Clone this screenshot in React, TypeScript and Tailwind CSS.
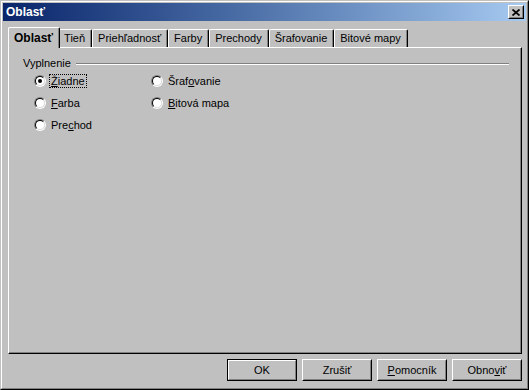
import React from "react";

const tabs = ["Oblasť", "Tieň", "Priehľadnosť", "Farby", "Prechody", "Šrafovanie", "Bitové mapy"];

const Radio = (props: { checked?: boolean }) => (
    <span className="flex h-[12px] w-[12px] shrink-0 items-center justify-center rounded-full border border-t-[#808080] border-l-[#808080] border-r-white border-b-white">
        <span className="flex h-[10px] w-[10px] items-center justify-center rounded-full border border-t-black border-l-black border-r-[#dfdfdf] border-b-[#dfdfdf] bg-white">
            {props.checked && <span className="h-[4px] w-[4px] rounded-full bg-black" />}
        </span>
    </span>
);

const RadioRow = (props: { checked?: boolean; focused?: boolean; children: React.ReactNode }) => (
    <div className="flex h-[22px] items-center">
        <Radio checked={props.checked} />
        <span className={"ml-[3px] border px-px leading-[12px] " + (props.focused ? "border-dotted border-black" : "border-transparent")}>
            {props.children}
        </span>
    </div>
);

const Button = (props: { isDefault?: boolean; children: React.ReactNode }) => {
    if (props.isDefault) {
        return (
            <div className="h-[22px] w-[70px] border border-black">
                <div className="flex h-full items-center justify-center border border-t-white border-l-white border-r-[#808080] border-b-[#808080]">
                    {props.children}
                </div>
            </div>
        );
    }
    return (
        <div className="h-[22px] w-[70px] border border-t-white border-l-white border-r-black border-b-black">
            <div className="flex h-full items-center justify-center border border-t-[#c0c0c0] border-l-[#c0c0c0] border-r-[#808080] border-b-[#808080]">
                {props.children}
            </div>
        </div>
    );
};

export default function App() {
    return (
        <div className="h-[390px] w-[529px] border border-t-[#c0c0c0] border-l-[#c0c0c0] border-r-black border-b-black bg-[#c0c0c0] font-['Liberation_Sans',Arial,sans-serif] text-[11px] text-black">
            <div className="flex h-full flex-col border border-t-white border-l-white border-r-[#808080] border-b-[#808080] p-px">
                {/* title bar */}
                <div className="flex h-[18px] shrink-0 items-center justify-between bg-linear-to-r from-[#0a246a] to-[#a6caf0] pl-[3px] pr-[2px]">
                    <span className="text-[12px] font-bold text-white">Oblasť</span>
                    <div className="h-[14px] w-[16px] border border-t-white border-l-white border-r-black border-b-black bg-[#c0c0c0]">
                        <div className="flex h-full items-center justify-center border border-t-[#c0c0c0] border-l-[#c0c0c0] border-r-[#808080] border-b-[#808080]">
                            <svg width="8" height="7" viewBox="0 0 8 7">
                                <path d="M0.5 0.5 L7.5 6.5 M7.5 0.5 L0.5 6.5" stroke="black" strokeWidth="1.7" fill="none" />
                            </svg>
                        </div>
                    </div>
                </div>

                {/* tabs */}
                <div className="relative z-10 mt-[6px] -mb-px ml-[5px] flex h-[21px] shrink-0 items-end pl-[2px]">
                    {tabs.map((t, i) =>
                        i === 0 ? (
                            <div key={t} className="relative z-10 -mx-[2px] h-[21px] rounded-tr-[2px] rounded-tl-[2px] border-t border-l border-r border-t-white border-l-white border-r-black bg-[#c0c0c0]">
                                <div className="flex h-full items-center border-r border-r-[#808080] px-[5px] pb-px text-[12px] font-bold">{t}</div>
                            </div>
                        ) : (
                            <div key={t} className="mb-px h-[18px] rounded-tr-[2px] rounded-tl-[2px] border-t border-l border-r border-t-white border-l-white border-r-black">
                                <div className="flex h-full items-center border-r border-r-[#808080] px-[5px]">{t}</div>
                            </div>
                        )
                    )}
                </div>

                {/* tab page */}
                <div className="ml-[5px] mr-[4px] flex-1 border border-t-white border-l-white border-r-black border-b-black">
                    <div className="h-full border-r border-b border-r-[#808080] border-b-[#808080] pt-[9px] pl-[14px] pr-[11px]">
                        <div className="flex h-[13px] items-center">
                            <span>Vyplnenie</span>
                            <div className="ml-[5px] h-[2px] flex-1 border-t border-b border-t-[#808080] border-b-white" />
                        </div>
                        <div className="flex pl-[11px]">
                            <div className="w-[117px]">
                                <RadioRow checked focused><span className="underline">Ž</span>iadne</RadioRow>
                                <RadioRow><span className="underline">F</span>arba</RadioRow>
                                <RadioRow>Pre<span className="underline">c</span>hod</RadioRow>
                            </div>
                            <div>
                                <RadioRow>Šraf<span className="underline">o</span>vanie</RadioRow>
                                <RadioRow><span className="underline">B</span>itová mapa</RadioRow>
                            </div>
                        </div>
                    </div>
                </div>

                {/* buttons */}
                <div className="mt-[5px] mb-[6px] flex shrink-0 justify-end gap-[5px] pr-[4px]">
                    <Button isDefault>OK</Button>
                    <Button>Zrušiť</Button>
                    <Button><span className="underline">P</span>omocník</Button>
                    <Button>Obno<span className="underline">v</span>iť</Button>
                </div>
            </div>
        </div>
    );
}
